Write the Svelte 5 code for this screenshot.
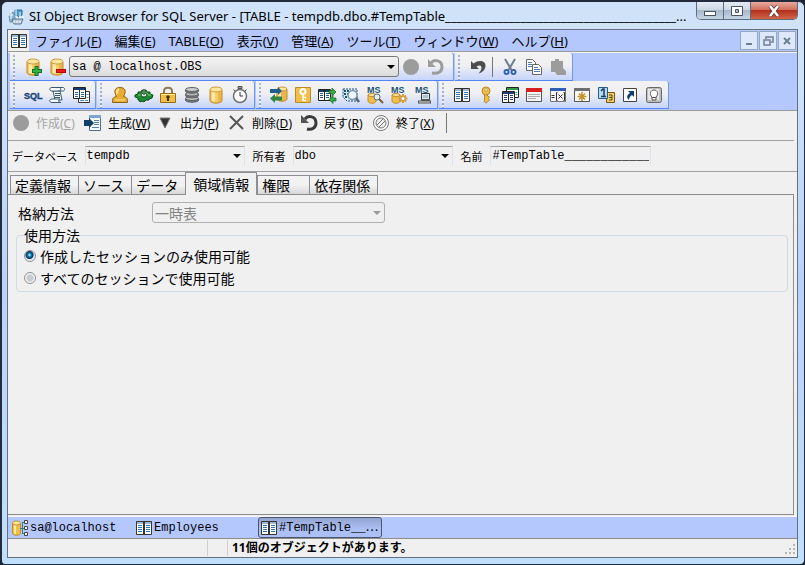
<script lang="ts">
  // Main window: menu, two toolbars, table editor and the list of open
  // child windows. Icons are plain 18x18 svg bodies, looked up by name.

  const gold = '#f0bf45';
  const navy = '#123f68';

  const cylinder = `<path d="M3 3.500v11c0 3.500 12 3.500 12 0v-11z" fill="#eab64a"/><path d="M4.500 5v10l3.500 1V5z" fill="#fde9a6"/><path d="M8 5v11h3V5z" fill="#f6cf69"/><path d="M3 4v10.500c0 3.500 12 3.500 12 0V4" fill="none" stroke="#c58a2c"/><ellipse cx="9" cy="3.500" rx="6" ry="2.500" fill="#fde6a0" stroke="#cf9a3c"/>`;
  const smallDb = `<path d="M2 9v6c0 3 8 3 8 0V9" fill="${gold}" stroke="#c58a2c"/><ellipse cx="6" cy="9" rx="4" ry="1.500" fill="#fde6a0" stroke="#c58a2c"/>`;
  const msText = `<text x="1" y="7" font-family="Liberation Sans, sans-serif" font-size="9" font-weight="bold" fill="#1c5577">MS</text>`;

  const icons: Record<string, string> = {
    app: `<path d="M2 8l4-3 2 3v7H3z" fill="#8eb5cf" stroke="#5c8dae"/><path d="M8 3h7v5l-3 2-4-2z" fill="#4e9ac6" stroke="#2b719d"/><path d="M4 3v9M9 2v8M13 5v7" stroke="#fff"/><path d="M5 12h11l-2 5H7z" fill="#b9cbd8" stroke="#55788f"/><path d="M1 8h5M9 10h8M6 15h8" stroke="#fff" stroke-dasharray="2 1"/>`,
    dbAdd: cylinder + `<path d="M12.500 8v10M8 13h10" stroke="#16702c" stroke-width="4"/><path d="M12.500 9v8M9 13h8" stroke="#2fb541" stroke-width="2"/>`,
    dbRemove: cylinder + `<path d="M8 11h10v4H8z" fill="#b00d0d"/><path d="M9 12h8v2H9z" fill="#f01818"/>`,
    circle: `<circle cx="9" cy="9" r="8" fill="#9c9c9c"/>`,
    redoOff: `<path d="M2 1v8h8L7 6.500z" fill="#9c9c9c"/><path d="M5 5c3-4 11-3 11 4 0 5-4 7-10 6" fill="none" stroke="#9c9c9c" stroke-width="3"/>`,
    undo: `<path d="M2 3v8h8L7.500 8.500c3-2 5-1 5 1 0 2-1 4-3 6 4-1 7-4 7-8 0-5-7-6-12-2z" fill="#4d4d4d"/>`,
    cut: `<path d="M4 1l6.500 11M14 1L7.500 12" stroke="#6d7d8d" stroke-width="2"/><circle cx="5.500" cy="14" r="2" fill="#fff" stroke="#2f62b0" stroke-width="2"/><circle cx="12.500" cy="14" r="2" fill="#fff" stroke="#2f62b0" stroke-width="2"/>`,
    copy: `<path d="M1.500 1.500h6l3 3v8h-9z" fill="#fff" stroke="#666"/><path d="M3 4.500h4M3 6.500h4M3 8.500h4" stroke="#4c7eb4"/><path d="M7.500 6.500h6l3 3v7h-9z" fill="#fff" stroke="#666"/><path d="M9 9.500h4M9 11.500h6M9 13.500h6" stroke="#4c7eb4"/>`,
    pasteOff: `<path d="M2 3h4V1h4v2h4v7l3 3v4H8l-2-3H2z" fill="#9c9c9c"/>`,
    sql: `<text x="0" y="13" font-family="Liberation Sans, sans-serif" font-size="9" font-weight="bold" fill="#1c4478" stroke="#1c4478" stroke-width=".4">SQL</text>`,
    script: `<path d="M5 5l2 9h7L12 5z" fill="#fff" stroke="#365a72"/><path d="M4 1.500h11c2 0 2 3.500 0 3.500h-3c1-1 1-2.500 0-3.500M4 1.500C1 1.500 1 5 4 5h8M12 13c-2 1-2 3.500 1 3.500H4c-3 0-3-3.500 0-3.500z" fill="#fff" stroke="#365a72"/><path d="M7 7.500h5M7 9.500h5M7 11.500h5" stroke="#365a72"/>`,
    tables: `<path d="M6.500 5.500h11v11h-11z" fill="#fff" stroke="#333"/><path d="M8 14.500h4M13 14.500h3M14.500 11.500h2M14.500 8.500h2" stroke="#568ebd"/><path d="M1.500 1.500h12v11h-12z" fill="#fff" stroke="#222"/><path d="M2 2h11v2H2z" fill="#153a74"/><path d="M7.500 2v10" stroke="#153a64"/><path d="M3 6.500h3M3 8.500h3M3 10.500h3M9 6.500h3M9 8.500h3M9 10.500h3" stroke="#2c62a0"/>`,
    user: `<path d="M1.500 16.500v-2c0-3 2-3.500 4-4-3-5-2-9 3.500-9s6.500 4 3.500 9c2 .5 4 1 4 4v2z" fill="#e9ac2e" stroke="#8c6215"/><path d="M8 3c-2 1-2.500 3-1.500 5" fill="none" stroke="#ffe79b" stroke-width="2"/><path d="M4 14h10" stroke="#ffe79b"/>`,
    gear: `<path d="M0 9l3-1V6h3l1-2h4l1 2h3v2l3 1-1 3-3 1v1h-3l-2 2-2-1-2 1-1-2H3v-2L0 11z" fill="#1c8a31" stroke="#10491c"/><path d="M3 9h3l1-2h5l1 2h3" fill="none" stroke="#6fdc74"/><ellipse cx="9" cy="9" rx="3" ry="2" fill="#dfe8df" stroke="#10491c"/><path d="M9 3v6" stroke="#6d756d" stroke-width="2"/>`,
    lock: `<path d="M5 8V5c0-4.500 8-4.500 8 0v3" fill="none" stroke="#8a7d55" stroke-width="2"/><path d="M1.500 7.500h15v9h-15z" fill="${gold}" stroke="#9a6c15"/><path d="M2 8.500h14" stroke="#ffec9d"/><circle cx="9" cy="11" r="1.800" fill="#422f0c"/><path d="M9 11v4" stroke="#422f0c" stroke-width="2"/>`,
    stack: `<g fill="#77797b" stroke="#5d6062"><path d="M2.500 12.500v1.500c0 3 13 3 13 0v-1.500"/><ellipse cx="9" cy="12.500" rx="6.500" ry="2" fill="#b9bbbd"/><path d="M2.500 8v1.500c0 3 13 3 13 0V8"/><ellipse cx="9" cy="8" rx="6.500" ry="2" fill="#b9bbbd"/><path d="M2.500 3.500V5c0 3 13 3 13 0V3.500"/><ellipse cx="9" cy="3.500" rx="6.500" ry="2" fill="#c9cbcd"/></g>`,
    db: cylinder,
    clock: `<path d="M7 .5h4v2H7zM2.500 3.500l2 2M15.500 3.500l-2 2" fill="#999" stroke="#555"/><circle cx="9" cy="10" r="6.500" fill="#fff" stroke="#707070" stroke-width="1.500"/><path d="M9 6v4h3" fill="none" stroke="#333"/>`,
    sync: `<path d="M7 3v10c0 3 10 3 10 0V3" fill="#eab64a" stroke="#c58a2c"/><path d="M8 4h3v10H8z" fill="#fde9a6"/><ellipse cx="12" cy="3" rx="5" ry="2" fill="#fde6a0" stroke="#cf9a3c"/><path d="M0 3h8V1l4 4-4 4V7H0z" fill="#1f5d8c"/><path d="M12 10.500H5V8l-5 4.500L5 17v-2.500h7z" fill="#318542"/>`,
    keyBox: `<path d="M1.500 1.500h15v15h-15z" fill="${gold}" stroke="#bb8a2b"/><circle cx="9" cy="5.500" r="2.500" fill="none" stroke="#fff" stroke-width="2"/><path d="M9 8v7M9 11.500h3M9 14.500h3" stroke="#fff" stroke-width="1.500"/>`,
    transfer: `<path d="M.5 3.500h12v11H.5z" fill="#fff" stroke="#222"/><path d="M1 4h11v2H1z" fill="#173d62"/><path d="M6.500 4v10" stroke="#222"/><path d="M2 7.500h3M2 9.500h3M2 11.500h3M8 7.500h3M8 9.500h3M8 11.500h3" stroke="#1f5a90"/><path d="M11 4.500h3V2l4 4-4 4V7.500h-3zM18 12h-3V9.500l-4 4 4 4V15h3z" fill="#35ae3e" stroke="#165f23" stroke-width=".7"/>`,
    search: `<path d="M1 3h14v12H5L1 11z" fill="#d9e8f4" stroke="#1c537f" stroke-dasharray="2 1"/><path d="M2 5h5M2 8h4M3 11h4" stroke="#1c537f" stroke-width="2" stroke-dasharray="2 1"/><circle cx="10.500" cy="9" r="4.500" fill="#eef7fc" stroke="#7d98aa" stroke-width="1.500"/><path d="M14 12l3 4" stroke="#57677a" stroke-width="2.500"/>`,
    msFind: msText + smallDb + `<circle cx="11" cy="11" r="3" fill="#e6f2fb" stroke="#566a7a"/><path d="M13 13l4 4" stroke="#765e34" stroke-width="2"/>`,
    msGear: msText + smallDb + `<path d="M13 8v9M8.500 12.500h9M10 9.500l6 6M16 9.500l-6 6" stroke="#cf9c45" stroke-width="2"/><circle cx="13" cy="12.500" r="1.500" fill="#fff"/>`,
    msPc: msText + `<path d="M7.500 7.500h8v6h-8z" fill="#dce9f0" stroke="#333"/><path d="M4 16h13M7 14.500h9" stroke="#555" stroke-width="3"/><path d="M5 16h11" stroke="#ddd"/><path d="M9 9h5v3H9z" fill="#a9c2d1"/>`,
    grid: `<path d="M1.500 2.500h15v13h-15z" fill="#fff" stroke="#333"/><path d="M2 3h14v2H2z" fill="#9fb8cf"/><path d="M9 3v12" stroke="#333" stroke-width="2"/><path d="M3 6.500h4M3 8.500h4M3 10.500h4M3 12.500h4M11 6.500h4M11 8.500h4M11 10.500h4M11 12.500h4" stroke="#2f75b5"/>`,
    key: `<path d="M7.500 8h3v2l2 1-1 1.500 1 1.500-2 2-1.500 1-1.500-1z" fill="${gold}" stroke="#b98a2a"/><circle cx="9" cy="5" r="4" fill="${gold}" stroke="#b98a2a"/><circle cx="9" cy="3.800" r="1.300" fill="#fff" stroke="#987022" stroke-width=".5"/>`,
    cascade: `<path d="M5.500 1.500h12v10h-12z" fill="#fff" stroke="#222"/><path d="M6 2h11v2H6z" fill="#2f9a4a"/><path d="M14.500 6.500h2M14.500 8.500h2" stroke="#2f9a4a"/><path d="M1.500 5.500h12v11h-12z" fill="#fff" stroke="#222"/><path d="M2 6h11v2H2z" fill="#2b3d7c"/><path d="M7.500 6v10" stroke="#222"/><path d="M3 9.500h3M3 11.500h3M3 13.500h3M9 9.500h3M9 11.500h3M9 13.500h3" stroke="#2b3d7c"/>`,
    redWin: `<path d="M1.500 2.500h15v13h-15z" fill="#f4f4f4" stroke="#555"/><path d="M1 2h16v4H1z" fill="#d81f1f"/><path d="M3 8.500h12M3 10.500h12M3 12.500h8" stroke="#aaa"/>`,
    func: `<path d="M1.500 2.500h15v13h-15z" fill="#f6f6f6" stroke="#777"/><path d="M1 2h16v3H1z" fill="#2f5fb4"/><path d="M2.500 9.500h3M2.500 11.500h3M8.500 6.500h-1v8h1M14.500 6.500h1v8h-1M9.500 8.500l4 4M13.500 8.500l-4 4" fill="none" stroke="#333"/>`,
    star: `<path d="M1.500 2.500h15v13h-15z" fill="#f6f6f6" stroke="#555"/><path d="M1 2h16v3H1z" fill="#6b6f70"/><path d="M9 6v9M4.500 10.500h9M6 7.500l6 6M12 7.500l-6 6" stroke="#c5942a" stroke-width="1.500"/>`,
    numbers: `<path d="M9.500 6.500h8v10h-8z" fill="#f3d06a" stroke="#715619"/><path d="M12 9h3v5h-3M12 11.500h3" fill="none" stroke="#574319"/><path d="M1.500 1.500h9v11h-9z" fill="#b8d9ef" stroke="#295a84"/><path d="M4 5l2-2h1v7M4 10.500h5" fill="none" stroke="#173e62" stroke-width="1.500"/>`,
    link: `<path d="M2.500 2.500h13v13h-13z" fill="#fff" stroke="#444"/><path d="M7 5h6v6l-2-2c-2 1-3 3-3 5-3-3-2-5 1-7z" fill="${navy}"/>`,
    bulb: `<rect x="1.500" y="1.500" width="15" height="15" rx="2" fill="#bfbfbf" stroke="#666"/><path d="M3 3h11v11H3z" fill="#e6e6e6"/><path d="M7 11C4 8 5.500 4 9 4s5 4 2 7v3H7z" fill="#fff" stroke="#555"/><path d="M7 11.500h4" stroke="#555"/>`,
    generate: `<path d="M5.500 1.500h11v15h-11z" fill="#f6fbff" stroke="#52708d"/><path d="M5 1h12v3H5z" fill="#7da3cf"/><path d="M10 6.500h5M10 8.500h5M10 10.500h5M8 13.500h7" stroke="#5482ad"/><path d="M0 6h5V4l5 5-5 5v-2H0z" fill="${navy}"/>`,
    output: `<path d="M4 4h10L9 14z" fill="#333" stroke="#777"/>`,
    remove: `<path d="M2 2l13 13M15 2L2 15" stroke="#575757" stroke-width="2"/>`,
    revert: `<path d="M1 1v8h8L6.500 6.500z" fill="#555"/><path d="M5 5c3-4 11-3 11 4 0 5-4 7-9 6" fill="none" stroke="#3a3a3a" stroke-width="3"/>`,
    exit: `<circle cx="9" cy="9" r="7.500" fill="#fff" stroke="#777"/><circle cx="9" cy="9" r="5" fill="#eee" stroke="#777"/><path d="M5 11l6-6M7 13l6-6" stroke="#777"/>`,
    server: `<path d="M1.500 4v10c0 3 8 3 8 0V4" fill="${gold}" stroke="#c58a2c"/><path d="M3 5h2v10H3z" fill="#fde9a6"/><ellipse cx="5.500" cy="4" rx="4" ry="2" fill="#ffed9f" stroke="#c58a2c"/><path d="M9 9.500h3M11.500 3v12M12 3.500h2M12 9.500h2M12 14.500h2" fill="none" stroke="#317e89"/><path d="M13.500 1.500h3v3h-3zM13.500 7.500h3v3h-3zM13.500 13.500h3v3h-3z" fill="#fff" stroke="#444"/>`
  };

  const menus = [
    ['ファイル', 'F'],
    ['編集', 'E'],
    ['TABLE', 'O'],
    ['表示', 'V'],
    ['管理', 'A'],
    ['ツール', 'T'],
    ['ウィンドウ', 'W'],
    ['ヘルプ', 'H']
  ];

  const toolGroups = [
    ['sql', 'script', 'tables'],
    ['user', 'gear', 'lock', 'stack', 'db', 'clock'],
    ['sync', 'keyBox', 'transfer', 'search', 'msFind', 'msGear', 'msPc'],
    ['grid', 'key', 'cascade', 'redWin', 'func', 'star', 'numbers', 'link', 'bulb']
  ];

  const actions = [
    { icon: 'circle', label: '作成', key: 'C', disabled: true },
    { icon: 'generate', label: '生成', key: 'W' },
    { icon: 'output', label: '出力', key: 'P' },
    { icon: 'remove', label: '削除', key: 'D' },
    { icon: 'revert', label: '戻す', key: 'R' },
    { icon: 'exit', label: '終了', key: 'X' }
  ];

  const tabs = ['定義情報', 'ソース', 'データ', '領域情報', '権限', '依存関係'];
  let activeTab = $state('領域情報');

  const windows = [
    { icon: 'server', label: 'sa@localhost', cut: false },
    { icon: 'grid', label: 'Employees', cut: false },
    { icon: 'grid', label: '#TempTable__', cut: true }
  ];
  let activeWindow = $state(2);

  let tableName = $state('#TempTable____________');
  let scope = $state('session');
</script>

{#snippet icon(name: string)}
  <svg class="icon" viewBox="0 0 18 18" aria-hidden="true">{@html icons[name]}</svg>
{/snippet}

{#snippet tool(name: string, disabled = false)}
  <button class="tool" aria-label={name} {disabled}>{@render icon(name)}</button>
{/snippet}

<div class="window">
  <header class="titlebar">
    {@render icon('app')}
    <h1>SI Object Browser for SQL Server - [TABLE - tempdb.dbo.#TempTable________________________________________...</h1>
    <div class="caption">
      <button aria-label="Minimize"><svg viewBox="0 0 14 12"><rect x="1.500" y="6.500" width="11" height="4" fill="#fff" stroke="#4a5565" /></svg></button>
      <button aria-label="Maximize"><svg viewBox="0 0 14 12"><path d="M1.500 1.500h11v9h-11zM5.500 4.500h3v3h-3z" fill="#fff" fill-rule="evenodd" stroke="#4a5565" /></svg></button>
      <button class="close" aria-label="Close"><svg viewBox="0 0 14 12"><path d="M3 1l8 10M11 1L3 11" stroke="#5a3a42" stroke-width="4" /><path d="M3 1l8 10M11 1L3 11" stroke="#fff" stroke-width="2.500" /></svg></button>
    </div>
  </header>

  <div class="client">
    <nav class="menubar">
      <span class="doc-icon">{@render icon('grid')}</span>
      {#each menus as [label, key]}
        <button class="menu">{label}(<u>{key}</u>)</button>
      {/each}
      <div class="mdi">
        <button aria-label="Minimize child"><svg viewBox="0 0 12 12"><path d="M3 9h6" stroke="#6d8095" stroke-width="2" /></svg></button>
        <button aria-label="Restore child"><svg viewBox="0 0 12 12"><path d="M4 4V2h7v5H9M2 5h6v5H2z" fill="none" stroke="#6d8095" stroke-width="1.500" /></svg></button>
        <button aria-label="Close child"><svg viewBox="0 0 12 12"><path d="M3 3l6 6M9 3L3 9" stroke="#6d8095" stroke-width="2" /></svg></button>
      </div>
    </nav>

    <div class="rebar">
      <div class="bar-row">
        <div class="group main">
          {@render tool('dbAdd')}
          {@render tool('dbRemove')}
          <span class="combo connection">
            <select aria-label="接続"><option>sa @ localhost.OBS</option></select>
          </span>
          {@render tool('circle', true)}
          {@render tool('redoOff', true)}
        </div>
        <div class="group">
          {@render tool('undo')}
          <span class="divider"></span>
          {@render tool('cut')}
          {@render tool('copy')}
          {@render tool('pasteOff', true)}
        </div>
      </div>
      <div class="bar-row">
        {#each toolGroups as names}
          <div class="group">
            {#each names as name}{@render tool(name)}{/each}
          </div>
        {/each}
      </div>
    </div>

    <div class="actions">
      {#each actions as a}
        <button class="action" disabled={a.disabled}>
          {@render icon(a.icon)}
          <span>{a.label}(<u>{a.key}</u>)</span>
        </button>
      {/each}
      <span class="divider"></span>
    </div>

    <div class="target">
      <label for="database">データベース</label>
      <span class="combo flat"><select id="database"><option>tempdb</option></select></span>
      <label for="owner">所有者</label>
      <span class="combo flat"><select id="owner"><option>dbo</option></select></span>
      <label for="name">名前</label>
      <input id="name" type="text" bind:value={tableName} />
    </div>

    <div class="tabs" role="tablist">
      {#each tabs as tab}
        <button
          class="tab"
          class:active={tab === activeTab}
          role="tab"
          aria-selected={tab === activeTab}
          onclick={() => (activeTab = tab)}
        >{tab}</button>
      {/each}
    </div>

    <main class="panel">
      <div class="field">
        <label for="storage">格納方法</label>
        <span class="combo storage"><select id="storage" disabled><option>一時表</option></select></span>
      </div>
      <fieldset>
        <legend>使用方法</legend>
        <label><input type="radio" value="session" bind:group={scope} />作成したセッションのみ使用可能</label>
        <label><input type="radio" value="all" bind:group={scope} />すべてのセッションで使用可能</label>
      </fieldset>
    </main>

    <div class="windows">
      {#each windows as w, i}
        <button class="win" class:active={i === activeWindow} onclick={() => (activeWindow = i)}>
          {@render icon(w.icon)}
          <span>{w.label}{#if w.cut}<span class="more">⋯</span>{/if}</span>
        </button>
      {/each}
    </div>

    <footer class="status">
      <span class="cell wide"></span>
      <span class="cell"></span>
      <span class="message">11個のオブジェクトがあります。</span>
      <svg class="size-grip" viewBox="0 0 12 12" aria-hidden="true">
        <path d="M9 2h2v2H9zM5 6h2v2H5zM9 6h2v2H9zM1 10h2v2H1zM5 10h2v2H5zM9 10h2v2H9z" fill="#b5b5b5" />
      </svg>
    </footer>
  </div>
</div>

<style>
  :global(body) {
    margin: 0;
    background: #1c2230;
  }
  .window {
    box-sizing: border-box;
    min-height: 100vh;
    display: flex;
    flex-direction: column;
    padding: 0 6px 6px 5px;
    border: 1px solid #232b3c;
    border-width: 2px 1px 1px 2px;
    border-radius: 7px 7px 5px 5px;
    background: linear-gradient(#cfe2f8, #cfe3fb 60px, #b8d3fa 50%, #bfe0fd);
    color: #000;
    font-family: 'Noto Sans', 'Noto Sans CJK JP', sans-serif;
    font-size: 12px;
  }
  button,
  select,
  input {
    margin: 0;
    font: inherit;
    color: inherit;
  }
  button {
    padding: 0;
    border: 0;
    background: none;
    white-space: nowrap;
  }
  .icon {
    width: 18px;
    height: 18px;
    flex: none;
    display: block;
    overflow: visible;
  }

  .titlebar {
    display: flex;
    align-items: center;
    height: 27px;
  }
  h1 {
    flex: 1;
    min-width: 0;
    margin: 0 0 0 4px;
    overflow: hidden;
    white-space: nowrap;
    font-size: 13px;
    font-weight: 400;
  }
  .caption {
    display: flex;
    align-self: flex-start;
    border: 1px solid #5d6b7e;
    border-top: 0;
    border-radius: 0 0 5px 5px;
    overflow: hidden;
  }
  .caption button {
    width: 27px;
    height: 17px;
    display: grid;
    place-items: center;
    border-right: 1px solid #5d6b7e;
    background: linear-gradient(#e3ebf4, #cbd6e3 50%, #a9b8cb 50%, #c6d5e6);
  }
  .caption .close {
    width: 46px;
    border-right: 0;
    background: linear-gradient(#e8a99c, #cf6a55 50%, #b3301c 50%, #cf6648);
  }
  .caption svg {
    width: 14px;
    height: 12px;
  }

  .client {
    flex: 1;
    display: flex;
    flex-direction: column;
    border: 1px solid #66707e;
    background: #f0f0f0;
  }

  .menubar {
    display: flex;
    align-items: center;
    height: 21px;
    background: #b4c8fe;
    border-bottom: 1px solid #999;
  }
  .doc-icon {
    display: grid;
    place-items: center;
    width: 21px;
    height: 21px;
    margin-right: 6px;
    background: #f0f0f0;
  }
  .menu {
    margin-right: 13px;
    font-size: 13px;
    line-height: 20px;
  }
  .mdi {
    display: flex;
    gap: 1px;
    margin-left: auto;
    margin-right: 1px;
  }
  .mdi button {
    width: 18px;
    height: 19px;
    display: grid;
    place-items: center;
    border: 1px solid #94a8c4;
    background: #dde9fb;
  }
  .mdi svg {
    width: 12px;
    height: 12px;
  }

  .rebar {
    padding: 0 1px 1px 2px;
    background: #b4c8fe;
    border-top: 1px solid #f5f5f5;
    border-bottom: 1px solid #999;
  }
  .bar-row {
    display: flex;
    gap: 1px;
  }
  .group {
    box-sizing: border-box;
    display: flex;
    align-items: center;
    height: 28px;
    padding: 0 2px 0 11px;
    border-right: 1px solid #7097f5;
    border-bottom: 1px solid #5585f6;
    border-radius: 0 3px 0 0;
    /* dotted drag grip over the bar's own gradient */
    background:
      linear-gradient(#f0f0f1 50%, transparent 50%) 3px 0 / 2px 4px repeat-y,
      linear-gradient(#a9b7d4, #8fa2cc) 3px 0 / 2px 100% no-repeat,
      linear-gradient(#f2f2f2, #f0f0f2 45%, #c6d5fc);
  }
  .group.main {
    padding-right: 6px;
  }
  .tool {
    width: 24px;
    height: 24px;
    display: grid;
    place-items: center;
  }
  .divider {
    width: 1px;
    height: 20px;
    margin: 0 5px 0 2px;
    background: #777;
  }

  .combo {
    position: relative;
    display: inline-flex;
  }
  .combo::after {
    content: '';
    position: absolute;
    right: 4px;
    top: 50%;
    margin-top: -2px;
    border: 4px solid transparent;
    border-top-color: #000;
    border-bottom: 0;
    pointer-events: none;
  }
  select {
    appearance: none;
    box-sizing: border-box;
    width: 100%;
    height: 21px;
    padding: 0 16px 0 2px;
    border: 1px solid #777;
    border-radius: 3px;
    background: linear-gradient(#f3f3f3, #e9e9e9 50%, #dcdcdc);
    font-family: 'Liberation Mono', 'Noto Sans CJK JP', monospace;
  }
  .connection {
    width: 330px;
  }

  .actions {
    box-sizing: border-box;
    display: flex;
    align-items: center;
    height: 30px;
    margin-right: 3px;
    padding-left: 4px;
    padding-bottom: 5px;
    border-bottom: 1px solid #a0a0a0;
  }
  .action {
    display: flex;
    align-items: center;
    gap: 6px;
    min-width: 72px;
  }
  .action:disabled {
    color: #a5a5a5;
  }

  .target {
    display: flex;
    align-items: center;
    height: 30px;
    padding-left: 4px;
    border-bottom: 1px solid #a0a0a0;
    font-size: 11px;
  }
  .target label {
    margin-right: 8px;
  }
  .target .combo {
    width: 160px;
    margin-right: 7px;
  }
  .flat select,
  .target input {
    box-sizing: border-box;
    height: 20px;
    border: 1px solid #dde3ec;
    border-top-color: #a5a5a5;
    border-bottom-color: #f0f0f0;
    border-radius: 0;
    background: #f0f0f0;
    font-family: 'Liberation Mono', monospace;
    font-size: 12px;
  }
  .flat select {
    padding-left: 0;
  }
  .target input {
    width: 161px;
    padding: 0 1px;
  }

  .tabs {
    display: flex;
    align-items: flex-end;
    height: 22px;
    padding-left: 2px;
    font-family: 'Noto Sans CJK JP', sans-serif;
    font-size: 14px;
  }
  .tab {
    box-sizing: border-box;
    height: 19px;
    min-width: 52px;
    padding: 0 7px 0 4px;
    border: 1px solid #8c8e94;
    border-right-width: 0;
    border-bottom: 0;
    background: linear-gradient(#f2f2f2 50%, #d8d8d8);
    line-height: 17px;
    text-align: left;
  }
  .tab:last-child {
    border-right-width: 1px;
  }
  .tab.active {
    height: 23px;
    padding: 0 7px;
    margin-bottom: -1px;
    border-right-width: 1px;
    background: #f0f0f0;
    z-index: 1;
  }

  .panel {
    flex: 1;
    margin: 0 3px 1px 0;
    padding: 7px 5px 8px 8px;
    border: 1px solid #8c8c8c;
    border-left: 0;
    font-family: 'Noto Sans CJK JP', sans-serif;
    font-size: 14px;
  }
  .field {
    display: flex;
    align-items: center;
    padding-left: 2px;
    line-height: 20px;
  }
  .field label {
    width: 134px;
  }
  .storage {
    width: 233px;
  }
  .storage select {
    border-color: #b0b0b0;
    background: #f0f0f0;
    color: #838383;
    opacity: 1;
    font-family: inherit;
  }
  .storage::after {
    border-top-color: #999;
  }
  fieldset {
    margin: 2px 0 0;
    padding: 0 7px 2px;
    border: 1px solid #d0dbe6;
    border-radius: 4px;
  }
  legend {
    padding: 0;
    line-height: 20px;
  }
  fieldset label {
    display: flex;
    align-items: center;
    gap: 4px;
    height: 22px;
    line-height: 20px;
  }
  input[type='radio'] {
    appearance: none;
    box-sizing: border-box;
    width: 12px;
    height: 12px;
    border: 1px solid #8a8f95;
    border-radius: 50%;
    background: radial-gradient(circle, #c8ccd0 40%, #fafafa 65%);
  }
  input[type='radio']:checked {
    background: radial-gradient(circle at 45% 40%, #7fe0ff 8%, #1479b0 22%, #0d2f52 45%, #e8eef2 55%);
  }

  .windows {
    display: flex;
    height: 21px;
    padding-left: 2px;
    border-top: 1px solid #f5f5f5;
    border-bottom: 1px solid #8c8c8c;
    background: #b4c8fe;
  }
  .win {
    box-sizing: border-box;
    display: flex;
    align-items: center;
    gap: 1px;
    width: 124px;
    padding: 0 1px;
    font-family: 'Liberation Mono', monospace;
  }
  .win.active {
    border: 1px solid #4a5570;
    border-radius: 3px;
    background: linear-gradient(#93a5d0, #adc0f5 60%);
  }
  .more {
    font-family: 'Noto Sans CJK JP', sans-serif;
    line-height: 1;
  }

  .status {
    display: flex;
    align-items: center;
    height: 18px;
    font-weight: 700;
  }
  .cell {
    width: 19px;
    height: 16px;
    border-right: 1px solid #cfcfcf;
  }
  .cell.wide {
    width: 199px;
  }
  .message {
    flex: 1;
    padding-left: 4px;
    line-height: 16px;
  }
  .size-grip {
    width: 12px;
    height: 12px;
    margin-right: 1px;
  }
</style>
